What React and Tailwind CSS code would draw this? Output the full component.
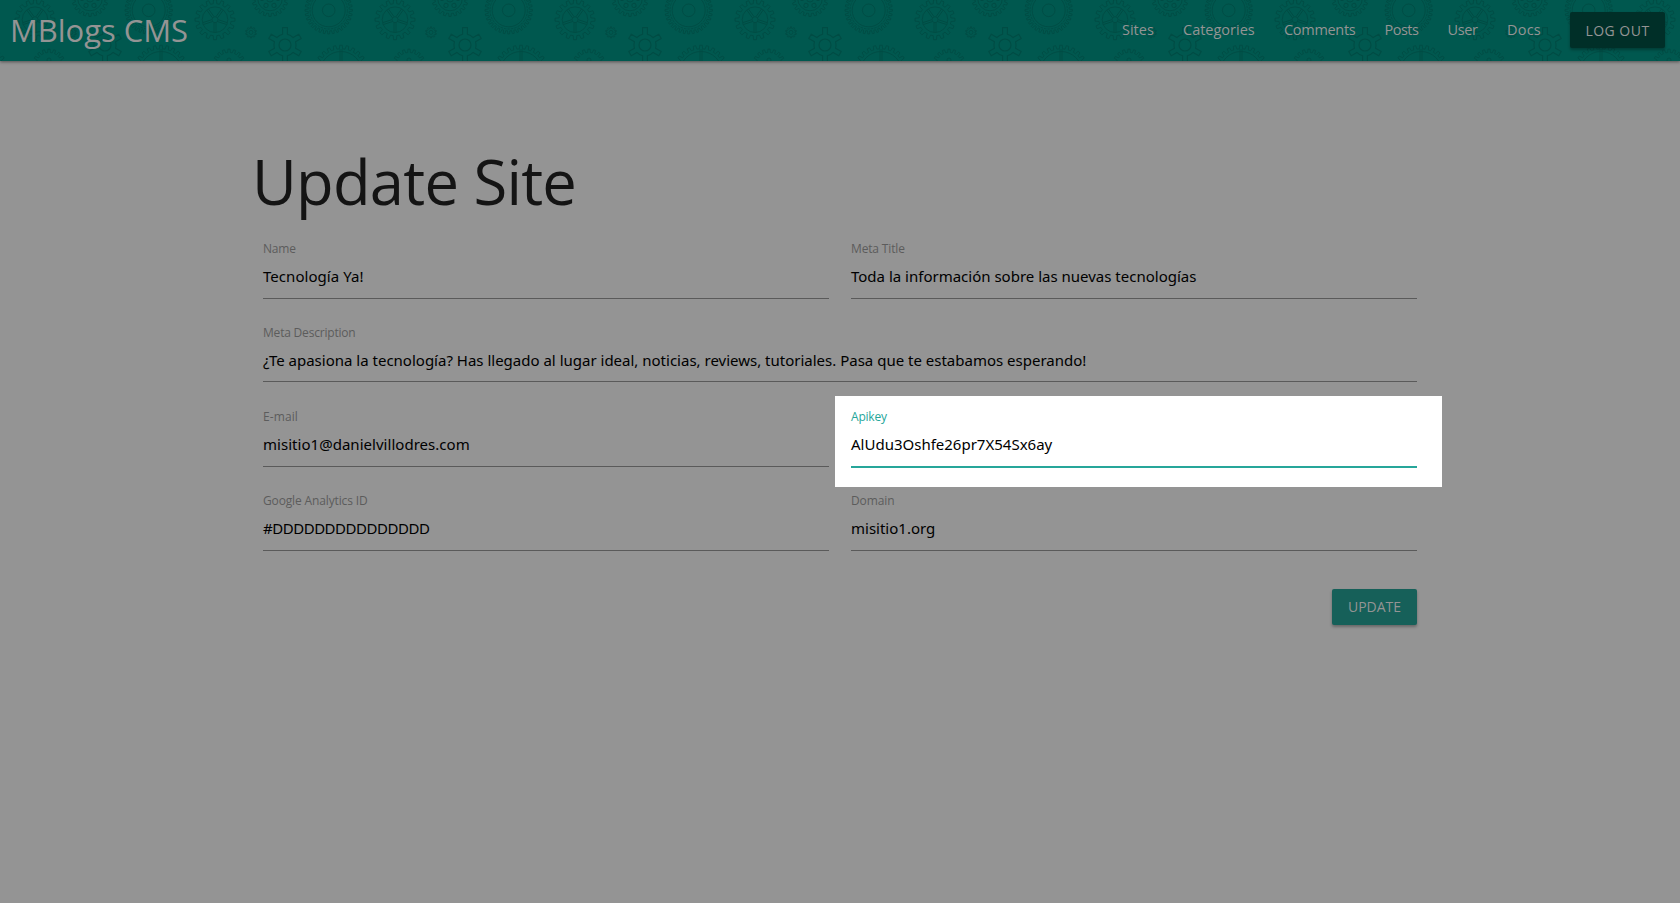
const TILE = 180;

function gearPath(cx, cy, teeth, root, outer, fill = 0.5) {
  const step = (Math.PI * 2) / teeth;
  const pt = (r, a) => `${(cx + r * Math.sin(a)).toFixed(2)} ${(cy - r * Math.cos(a)).toFixed(2)}`;
  let d = "";
  for (let i = 0; i < teeth; i++) {
    const a = i * step;
    const half = (step * fill) / 2;
    d += `${i ? "L" : "M"}${pt(root, a - half * 1.15)}L${pt(outer, a - half * 0.75)}L${pt(outer, a + half * 0.75)}L${pt(root, a + half * 1.15)}`;
    d += `A${root} ${root} 0 0 1 ${pt(root, a + step - half * 1.15)}`;
  }
  return d + "Z";
}

const holes = [0, 60, 120, 180, 240, 300];
const spokes = [36, 108, 180, 252, 324];

function GearTile({ x }) {
  return (
    <g transform={`translate(${x} 0)`}>
      <path d={gearPath(35, 19.7, 16, 16, 20)} />
      <circle cx="35" cy="19.7" r="12.8" />
      <circle cx="35" cy="19.7" r="3" />
      {spokes.map((a) => (
        <path key={a} d="M34 16.5V7M36 16.5V7" transform={`rotate(${a} 35 19.7)`} />
      ))}
      <path d={gearPath(71, 32.4, 10, 4, 5.5)} />
      <circle cx="71" cy="32.4" r="2" />
      <path d={gearPath(90, -1.5, 20, 15, 18)} />
      <circle cx="90" cy="-1.5" r="12.3" />
      <circle cx="90" cy="-1.5" r="3.5" />
      {holes.map((a) => (
        <circle key={a} cx="90" cy="6.5" r="2.1" transform={`rotate(${a + 30} 90 -1.5)`} />
      ))}
      <path d={gearPath(105, 45, 6, 11, 17.5, 0.36)} strokeWidth="1.1" strokeLinejoin="round" />
      <circle cx="105" cy="45" r="6" strokeWidth="1.1" />
      <path d={gearPath(148.7, 10.3, 32, 20.5, 23.7)} />
      <circle cx="148.7" cy="10.3" r="18.7" strokeDasharray="2.5 1" />
      <circle cx="148.7" cy="10.3" r="16.5" />
      <circle cx="148.7" cy="10.3" r="6.3" />
      <path d={gearPath(49, 65.5, 18, 13, 16.4)} />
      <circle cx="49" cy="60" r="2" />
      <path d={gearPath(161, 72.5, 26, 23.7, 27.3)} />
      <circle cx="161" cy="72.5" r="21" />
      <path d="M160 49V62M162 49V62" />
    </g>
  );
}

function GearBackdrop() {
  const tiles = Array.from({ length: 11 }, (_, i) => (i - 1) * TILE);
  return (
    <svg className="absolute inset-0" width="1680" height="61" fill="none" stroke="#004c44" strokeWidth="0.9" aria-hidden="true">
      {tiles.map((x) => (
        <GearTile key={x} x={x} />
      ))}
    </svg>
  );
}

const links = [
  ["Sites", "w-[61px]"],
  ["Categories", "w-[101px]"],
  ["Comments", "w-[100.5px] tracking-[-0.3px]"],
  ["Posts", "w-[63px] tracking-[-0.5px]"],
  ["User", "w-[59.5px] tracking-[-0.4px]"],
  ["Docs", "w-[63px] tracking-[0.2px]"],
];

function Header() {
  return (
    <header className="relative flex h-[61px] items-start justify-between bg-[#00584f] pr-[15px] pl-[10px] text-[#949494] shadow-[0_1px_3px_rgba(0,0,0,0.45)]">
      <GearBackdrop />
      <a className="relative text-[31px] leading-[60px] tracking-[-0.05px] whitespace-nowrap">MBlogs CMS</a>
      <nav className="relative flex">
        {links.map(([label, style]) => (
          <a key={label} className={`pl-[15px] text-[14.5px] leading-[60px] whitespace-nowrap ${style}`}>
            {label}
          </a>
        ))}
        <button className="mt-3 ml-[15px] h-9 w-[95px] rounded-[2px] bg-[#002f28] pt-px text-[14px] leading-[36px] tracking-[0.48px] shadow-[0_2px_3px_rgba(0,0,0,0.3)]">
          LOG OUT
        </button>
      </nav>
    </header>
  );
}

function Field({ label, value, labelStyle = "", valueStyle = "", wide, active }) {
  return (
    <div className={`relative h-[84px] pt-[26px] ${wide ? "col-span-2" : ""}`}>
      {active && <div className="absolute top-[13px] -right-[25px] -left-4 h-[91px] bg-white" />}
      <div className={`relative ${active ? "z-10" : ""}`}>
        <label className={`block text-[12px] leading-4 ${active ? "text-[#26a69a]" : "text-[#5c5c5c]"} ${labelStyle}`}>{label}</label>
        <div
          className={`mt-[9px] font-['Noto_Sans',sans-serif] text-[15px] leading-5 whitespace-nowrap text-black ${
            active ? "border-b-2 border-[#26a69a]" : "border-b border-[#5a5a5a]"
          } ${wide ? "pb-[11px]" : "pb-3"} ${valueStyle}`}
        >
          {value}
        </div>
      </div>
    </div>
  );
}

export default function App() {
  return (
    <div className="h-[903px] w-[1680px] overflow-hidden bg-[#949494] font-['Open_Sans',sans-serif]">
      <Header />
      <main className="px-[263px] pt-[85px]">
        <h1 className="-ml-[11px] h-[69px] text-[61.5px] leading-[70px] tracking-[-0.75px] text-[#141414]">Update Site</h1>
        <form className="grid grid-cols-2 gap-x-[22px]">
          <Field label="Name" value="Tecnología Ya!" labelStyle="tracking-[-0.2px]" valueStyle="tracking-[0.05px]" />
          <Field label="Meta Title" value="Toda la información sobre las nuevas tecnologías" labelStyle="tracking-[-0.15px]" />
          <Field
            wide
            label="Meta Description"
            value="¿Te apasiona la tecnología? Has llegado al lugar ideal, noticias, reviews, tutoriales. Pasa que te estabamos esperando!"
            labelStyle="tracking-[-0.2px]"
          />
          <Field label="E-mail" value="misitio1@danielvillodres.com" labelStyle="tracking-[0.1px]" valueStyle="tracking-[0.03px]" />
          <Field active label="Apikey" value="AlUdu3Oshfe26pr7X54Sx6ay" labelStyle="tracking-[-0.2px]" />
          <Field label="Google Analytics ID" value="#DDDDDDDDDDDDDDD" labelStyle="tracking-[-0.14px]" valueStyle="tracking-[-0.47px]" />
          <Field label="Domain" value="misitio1.org" labelStyle="tracking-[-0.1px]" />
        </form>
        <div className="mt-[38px] flex justify-end">
          <button className="h-9 w-[85px] rounded-[2px] bg-[#166059] text-[14px] leading-[36px] text-[#949494] shadow-[0_2px_3px_rgba(0,0,0,0.3)]">
            UPDATE
          </button>
        </div>
      </main>
    </div>
  );
}
